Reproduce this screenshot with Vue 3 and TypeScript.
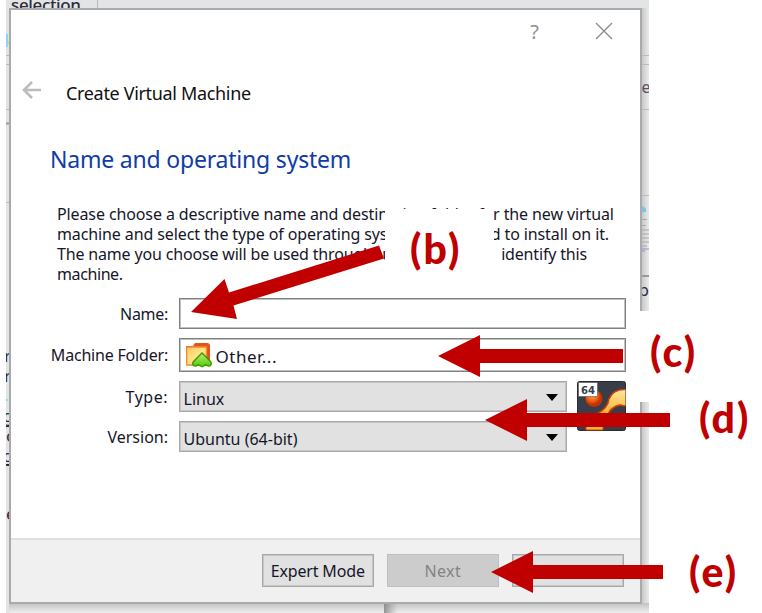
<script setup lang="ts">
interface Arrow { points: string }
interface Callout { id: string; text: string }
interface Line { id: string; text: string; tail?: string }

const description: Line[] = [
  { id: 'l1', text: 'Please choose a descriptive name and destination folder for the new virtual' },
  { id: 'l2', text: 'machine and select the type of operating sys', tail: 'd to install on it.' },
  { id: 'l3', text: 'The name you choose will be used throughou', tail: 'identify this' },
  { id: 'l4', text: 'machine.' },
]

const arrows: Arrow[] = [
  { points: '191,312 224.5,279 229,292.5 379,245.5 384,258.5 233.5,305.5 237,319' },
  { points: '438,356 480,335 480,349 623,349 623,363 480,363 480,377' },
  { points: '485,420 527,399 527,413 670,413 670,427 527,427 527,441' },
  { points: '491,572 533,551 533,565 663,565 663,579 533,579 533,593' },
]

const callouts: Callout[] = [
  { id: 'b', text: '(b)' },
  { id: 'c', text: '(c)' },
  { id: 'd', text: '(d)' },
  { id: 'e', text: '(e)' },
]
</script>

<template>
  <main class="stage">
    <svg class="backdrop" width="762" height="613" viewBox="0 0 762 613">
      <defs>
        <linearGradient id="side" x1="0" x2="1">
          <stop offset="0" stop-color="#c3c4c5" /><stop offset="1" stop-color="#ebebec" />
        </linearGradient>
        <linearGradient id="below" x1="0" x2="0" y1="0" y2="1">
          <stop offset="0" stop-color="#c2c2c2" /><stop offset="1" stop-color="#eeeeee" />
        </linearGradient>
        <linearGradient id="edge" x1="0" x2="1">
          <stop offset="0" stop-color="#777" stop-opacity=".75" /><stop offset="1" stop-color="#999" stop-opacity="0" />
        </linearGradient>
        <clipPath id="sheet"><rect x="6" y="0" width="643" height="613" /></clipPath>
      </defs>
      <g clip-path="url(#sheet)">
        <rect x="6" y="0" width="643" height="613" fill="#e1e2e4" />
        <rect x="6" y="0" width="643" height="8" fill="#e2e4e5" />
        <rect x="6" y="124" width="4" height="489" fill="#e3e3e3" />
        <rect x="641" y="8" width="8" height="603" fill="url(#side)" />
        <rect x="9" y="603" width="640" height="10" fill="url(#below)" />
        <rect x="384" y="603" width="14" height="10" fill="url(#edge)" />
        <path d="M97.5 0V8M6 55.5h4M6 64.5h4M6 109.5h4M641 55.5h8M641 64.5h8M641 109.5h8M6 202.5h4M641 195.5h8" stroke="#b9babb" />
        <path d="M6 123.500h4M641 276h8" stroke="#999" stroke-width="2" />
        <rect x="6" y="34" width="2" height="13" fill="#8fd3f5" />
        <path d="M641 212v-4l2-2 3 3v3z" fill="#7cc3e4" />
        <path d="M641 219.500h6M641 225.500h5M641 230h8M641 234h8M641 238h8M641 242h8M641 246h6" stroke="#aaa" />
        <path d="M641 249h8M641 251h4" stroke="#7773d5" stroke-width=".7" />
        <g class="behind">
          <text x="11" y="11" textLength="70" class="sel">selection</text>
          <text x="8" y="47" fill="#8a4a20">o</text>
          <text x="641.500" y="93" class="small">e</text>
          <text x="638.500" y="296">p</text>
          <text x="4" y="362">r</text>
          <text x="4" y="382">r</text>
          <text x="3" y="422">g</text>
          <text x="6" y="442">o</text>
          <text x="3" y="462">g</text>
          <text x="6" y="520">e</text>
        </g>
        <path d="M6 426.500h4M6 464.500h4" stroke="#222" />
        <rect x="6" y="399" width="1.500" height="2" fill="#57e5ee" />
      </g>
    </svg>

    <section class="dialog">
      <header class="titlebar">
        <span class="help">?</span>
        <svg class="close" width="18" height="18" viewBox="0 0 18 18"><path d="M1 1L17 17M17 1L1 17" /></svg>
      </header>

      <div class="wizard">
        <svg class="back" width="20" height="18" viewBox="0 0 20 18"><path d="M19 9H2M10 1L2 9l8 8" /></svg>
        <span class="wizard-name">Create Virtual Machine</span>
      </div>

      <h1 class="heading"><span>Name and operating system</span></h1>

      <div class="description">
        <div v-for="line in description" :key="line.id" class="line" :class="line.id">
          <span>{{ line.text }}</span><span v-if="line.tail" class="tail">{{ line.tail }}</span>
        </div>
      </div>

      <div class="form">
        <label class="lname">Name:</label>
        <div class="field name"></div>
        <label class="lfolder">Machine Folder:</label>
        <div class="field folder">
          <svg width="26" height="26" viewBox="0 0 26 26">
            <defs>
              <linearGradient id="paper" x1="0" y1="0" x2="1" y2="1"><stop offset="0" stop-color="#ffc765" /><stop offset=".5" stop-color="#ffe483" /><stop offset="1" stop-color="#ffbd43" /></linearGradient>
              <linearGradient id="leaf" x1="0" y1="0" x2="0" y2="1"><stop offset="0" stop-color="#b9ef75" /><stop offset="1" stop-color="#54c900" /></linearGradient>
            </defs>
            <path d="M0 4h7l2-3h12q3 0 3 3v18H0z" fill="#e9501a" />
            <path d="M.7 5h19.800v18H.7z" fill="url(#paper)" stroke="#ef8a36" stroke-width="1.300" />
            <path d="M16 11L24.500 19.500q1.500 2 0 4-2 1.500-4-.5h-1l-3.500 1.800-3.500-1.800h-1q-2 2-4 .5-1.500-2 0-4z" fill="url(#leaf)" stroke="#369500" stroke-width="1.300" />
          </svg>
          <span class="other">Other...</span>
        </div>
        <label class="ltype">Type:</label>
        <div class="select type"><span class="linux">Linux</span><i class="caret"></i></div>
        <svg class="os" width="49" height="50" viewBox="0 0 49 50">
          <defs>
            <radialGradient id="ball" cx=".4" cy=".35"><stop offset="0" stop-color="#ff9b45" /><stop offset=".6" stop-color="#f46212" /><stop offset="1" stop-color="#c33200" /></radialGradient>
            <linearGradient id="ring" x1="0" y1="0" x2="0" y2="1"><stop offset="0" stop-color="#ffe9a3" /><stop offset="1" stop-color="#ffb02d" /></linearGradient>
          </defs>
          <rect x=".5" y=".5" width="48" height="49" rx="2" fill="#393d48" stroke="#282b34" />
          <circle cx="17" cy="17.500" r="8.500" fill="url(#ball)" />
          <path d="M48.500 8.500Q36 8 32 18 31 27 20 33L31 33Q34 26 43 24l5.500 1z" fill="url(#ring)" />
          <path d="M48.500 8.500Q36 8 32 18 31 27 20 33M31 33Q34 26 43 24l5.500 1" fill="none" stroke="#d14100" stroke-width="1.600" />
          <path d="M9 44h17v5H9z" fill="#ffb834" stroke="#d14100" />
          <rect x="1.500" y="1.500" width="19" height="14" fill="#fff" stroke="#555" stroke-width=".6" />
          <text x="4" y="12.500" textLength="14" lengthAdjust="spacingAndGlyphs">64</text>
        </svg>
        <label class="lversion">Version:</label>
        <div class="select version"><span class="ubuntu">Ubuntu (64-bit)</span><i class="caret"></i></div>
      </div>

      <footer class="footer">
        <button class="btn expert"><span>Expert Mode</span></button>
        <button class="btn next" disabled><span>Next</span></button>
        <button class="btn cancel"><span>Cancel</span></button>
      </footer>
    </section>

    <div class="blank blank-b"></div>
    <div class="blank blank-c"></div>
    <svg class="arrows" width="762" height="613" viewBox="0 0 762 613">
      <polygon v-for="a in arrows" :key="a.points" :points="a.points" />
    </svg>
    <span v-for="c in callouts" :key="c.id" class="callout" :class="'callout-' + c.id">{{ c.text }}</span>
  </main>
</template>

<style>
body { background: #fff; overflow: hidden; }
</style>

<style scoped>
.stage { position: relative; width: 762px; height: 613px; overflow: hidden; background: #fff; font-family: "Noto Sans", sans-serif; color: #16162a; }
.backdrop, .arrows { position: absolute; left: 0; top: 0; display: block; }
.behind { font-family: "Noto Sans", sans-serif; font-size: 17px; fill: #2d2d3c; }
.sel { font-weight: 500; }
.small { font-size: 16px; fill: #5d5063; }
.dialog { position: absolute; left: 9px; top: 8px; width: 633px; height: 596px; box-sizing: border-box; border: 2px solid #a9aaab; background: #fff; display: flex; flex-direction: column; }
.titlebar { height: 42px; display: flex; align-items: center; justify-content: flex-end; padding-right: 27px; flex: none; box-sizing: border-box; }
.help { font-size: 20px; color: #8f8f8f; margin-right: 56px; line-height: 44px; padding-top: 2px; }
.close path { stroke: #8d8d8d; stroke-width: 1.4; fill: none; }
.wizard { height: 80px; display: flex; align-items: center; padding-left: 11px; flex: none; }
.back { margin-top: -4px; }
.back path { stroke: #bcbcbc; stroke-width: 2.6; fill: none; }
.wizard-name { margin-left: 24px; margin-top: 2px; font-size: 18px; color: #111; white-space: nowrap; letter-spacing: -.33px; }
.heading { margin: 0; height: 66px; padding: 10px 0 0 39px; font-weight: 400; font-size: 23px; letter-spacing: -.2px; line-height: 34px; color: #0f3ca5; white-space: nowrap; box-sizing: border-box; flex: none; }
.description { height: 92px; margin-top: 2px; box-sizing: border-box; padding: 4px 0 0 46px; font-size: 16px; line-height: 20px; white-space: nowrap; flex: none; }
.line { display: flex; justify-content: space-between; width: 557px; letter-spacing: -.11px; }
.l2 { width: 552px; }
.l3 { width: 530px; letter-spacing: -.17px; }
.l4 { letter-spacing: -.4px; }
.tail { margin-left: auto; }
.form { display: grid; grid-template-columns: 157px 388px 49px; grid-template-rows: 31px 34px 31px 31px; column-gap: 10.5px; row-gap: 9px; padding-top: 6px; height: 246px; box-sizing: border-box; flex: none; }
.form label { grid-column: 1; text-align: right; font-size: 16px; line-height: 32px; white-space: nowrap; }
.form .lname { letter-spacing: -.3px; }
.form .lfolder { letter-spacing: -.2px; line-height: 35px; }
.form .ltype { letter-spacing: .5px; }
.form .lversion { line-height: 33px; }
.field { grid-column: 2 / 4; border: 1px solid #7f8082; box-shadow: inset 0 0 0 1px #c0c0c1; box-sizing: border-box; display: flex; align-items: center; background: #fff; }
.folder svg { margin-left: 6px; }
.other { margin-left: 4px; font-size: 17px; letter-spacing: .5px; line-height: 30px; padding-top: 3px; }
.select { grid-column: 2; border: 1px solid #a8a8a8; box-shadow: inset 0 0 0 1px #c6c6c6; background: #e1e1e1; box-sizing: border-box; display: flex; align-items: center; justify-content: space-between; padding: 4px 8px 0 4px; font-size: 16px; line-height: 26px; }
.caret { width: 0; height: 0; border-left: 6px solid transparent; border-right: 6px solid transparent; border-top: 7px solid #000; margin-bottom: 3px; }
.os { grid-column: 3; grid-row: 3 / 5; }
.os text { font: bold 11px "DejaVu Sans", sans-serif; fill: #393d48; }
.footer { flex: 1; border-top: 2px solid #dfdfdf; background: #f0f0f0; display: flex; justify-content: flex-end; align-items: flex-start; gap: 12.5px; padding: 14px 16px 0 0; box-sizing: border-box; }
.btn { width: 112.5px; height: 33px; padding: 1px 0 0; border: 1px solid #a8a8a8; box-shadow: inset 0 0 0 1px #c6c6c6; background: #e1e1e1; font: 16px "Noto Sans", sans-serif; letter-spacing: -.15px; color: #16162a; white-space: nowrap; }
.next { background: #ccc; border-color: #bfbfbf; color: #838383; box-shadow: none; letter-spacing: .4px; }
.cancel { font-size: 16px; padding-top: 2px; }
.blank { position: absolute; background: #fff; }
.blank-b { left: 385px; top: 209px; width: 109px; height: 81px; }
.blank-c { left: 627px; top: 311px; width: 135px; height: 91px; }
.arrows polygon { fill: #c00000; }
.callout { position: absolute; font: 900 41px/48px Lato, sans-serif; letter-spacing: 2.2px; color: #c00000; white-space: nowrap; }
.callout-b { left: 410px; top: 225px; }
.callout-c { left: 650px; top: 328px; }
.callout-d { left: 699px; top: 394px; }
.callout-e { left: 689px; top: 548px; }
</style>
